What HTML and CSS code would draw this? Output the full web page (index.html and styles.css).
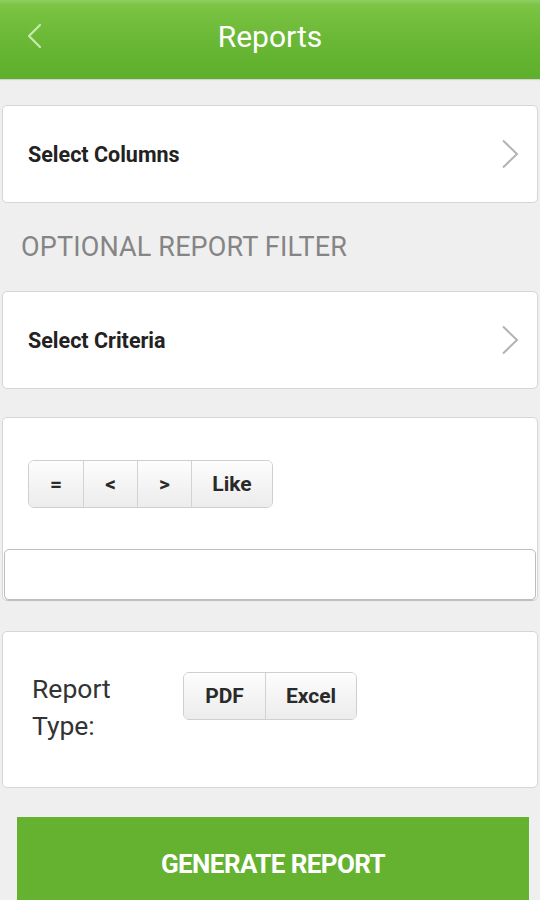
FILE: index.html
```html
<!DOCTYPE html>
<html>
<head>
<meta charset="utf-8">
<title>Reports</title>
<link rel="stylesheet" href="styles.css">
</head>
<body>
<header class="topbar">
  <span class="back">
    <svg width="16" height="26" viewBox="0 0 16 26"><path d="M14 2 L3 13 L14 24" fill="none" stroke="#c9e8ad" stroke-width="2.2" stroke-linecap="round" stroke-linejoin="round"/></svg>
  </span>
  <h1 class="title">Reports</h1>
</header>
<main class="content">
  <div class="card nav-card nav-first">
    <span class="nav-label">Select Columns</span>
    <svg class="chev" width="18" height="30" viewBox="0 0 18 30"><path d="M2 1.5 L16 15 L2 28.5" fill="none" stroke="#b3b3b3" stroke-width="2"/></svg>
  </div>
  <div class="section-label">OPTIONAL REPORT FILTER</div>
  <div class="card nav-card">
    <span class="nav-label">Select Criteria</span>
    <svg class="chev" width="18" height="30" viewBox="0 0 18 30"><path d="M2 1.5 L16 15 L2 28.5" fill="none" stroke="#b3b3b3" stroke-width="2"/></svg>
  </div>
  <div class="card filter-card">
    <div class="seg seg-ops">
      <span class="seg-btn w54">=</span>
      <span class="seg-btn w54">&lt;</span>
      <span class="seg-btn w54">&gt;</span>
      <span class="seg-btn w81">Like</span>
    </div>
    <div class="value-input"></div>
  </div>
  <div class="card type-card">
    <div class="type-label">Report<br>Type:</div>
    <div class="seg">
      <span class="seg-btn w81">PDF</span>
      <span class="seg-btn w91">Excel</span>
    </div>
  </div>
  <div class="generate">GENERATE REPORT</div>
</main>
</body>
</html>
```
FILE: styles.css
```css
html, body {
  margin: 0;
  padding: 0;
  background: #efefef;
  font-family: Roboto, "Liberation Sans", sans-serif;
}
.topbar {
  height: 79px;
  background: linear-gradient(to bottom, #8fcf66 0px, #7cc443 5px, #6ab836 50%, #5eaf2b 100%);
  display: flex;
  align-items: center;
  justify-content: center;
  position: relative;
  box-shadow: 0 1px 1px rgba(0,0,0,0.12);
}
.back {
  position: absolute;
  left: 26px;
  top: 23px;
  display: flex;
}
.title {
  margin: 0;
  color: #ffffff;
  font-weight: 400;
  font-size: 30px;
  line-height: 1;
  padding-bottom: 6px;
}
.content {
  padding: 26px 2px 0 2px;
  display: flex;
  flex-direction: column;
}
.card {
  background: #ffffff;
  border: 1px solid #d6d6d6;
  border-radius: 5px;
  box-sizing: border-box;
}
.nav-card {
  height: 98px;
  display: flex;
  align-items: center;
  justify-content: space-between;
  padding: 0 18px 0 25px;
}
.nav-label {
  font-size: 21.5px;
  font-weight: 700;
  color: #222222;
  padding-top: 1px;
}
.chev {
  display: block;
}
.section-label {
  height: 88px;
  box-sizing: border-box;
  padding: 29px 0 0 19px;
  font-size: 27px;
  line-height: 30px;
  color: #858585;
  letter-spacing: 0.15px;
}
.filter-card {
  margin-top: 28px;
  padding: 42px 0 0 0;
  display: flex;
  flex-direction: column;
}
.seg {
  display: flex;
  align-self: flex-start;
  border: 1px solid #cfcfcf;
  border-radius: 6px;
  overflow: hidden;
  height: 48px;
  box-sizing: border-box;
}
.seg-ops {
  margin-left: 25px;
}
.seg-btn {
  display: flex;
  align-items: center;
  justify-content: center;
  background: linear-gradient(to bottom, #fdfdfd, #ececec);
  font-size: 21px;
  font-weight: 700;
  color: #2a2a2a;
  box-sizing: border-box;
  border-left: 1px solid #d2d2d2;
}
.seg-btn:first-child {
  border-left: none;
}
.w54 { width: 54px; }
.w81 { width: 81px; }
.w91 { width: 91px; }
.value-input {
  margin: 41px 1px 0 1px;
  height: 51px;
  box-sizing: border-box;
  border: 1px solid #bdbdbd;
  border-radius: 5px;
  background: #ffffff;
  box-shadow: 0 1px 1px rgba(0,0,0,0.12);
}
.type-card {
  margin-top: 30px;
  display: flex;
  align-items: flex-start;
  padding: 40px 0 41px 29px;
}
.type-label {
  width: 151px;
  font-size: 26.5px;
  line-height: 37px;
  color: #333333;
  margin-top: -2px;
  margin-bottom: 2px;
}
.generate {
  margin: 29px 9px 0 15px;
  height: 94px;
  background: #64b22f;
  color: #ffffff;
  display: flex;
  align-items: center;
  justify-content: center;
  font-size: 26px;
  font-weight: 700;
  letter-spacing: -0.6px;
}
```
